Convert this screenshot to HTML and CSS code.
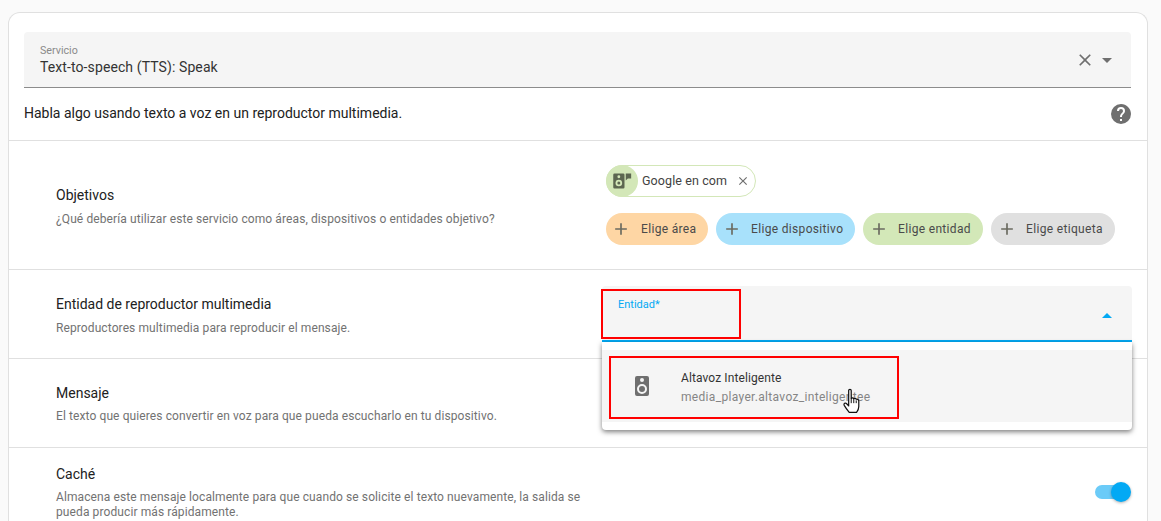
FILE: index.html
```html
<!DOCTYPE html>
<html lang="es">
<head>
<meta charset="utf-8">
<title>Text-to-speech</title>
<link rel="stylesheet" href="styles.css">
</head>
<body>
<main class="card">
  <section class="head">
    <div class="service">
      <div class="service-text">
        <span class="service-label">Servicio</span>
        <span class="service-value">Text-to-speech (TTS): Speak</span>
      </div>
      <svg class="ico-x" viewBox="0 0 24 24"><path d="M19 6.41L17.59 5 12 10.59 6.41 5 5 6.41 10.59 12 5 17.59 6.41 19 12 13.41 17.59 19 19 17.59 13.41 12z"/></svg>
      <svg class="ico-caret" viewBox="0 0 24 24"><path d="M7 10l5 5 5-5z"/></svg>
    </div>
    <div class="desc-row">
      <p class="desc">Habla algo usando texto a voz en un reproductor multimedia.</p>
      <svg class="ico-help" viewBox="0 0 24 24"><path d="M15.07 11.25l-.9.92C13.45 12.89 13 13.5 13 15h-2v-.5c0-1.11.45-2.11 1.17-2.83l1.24-1.26c.37-.36.59-.86.59-1.41a2 2 0 0 0-2-2 2 2 0 0 0-2 2H8a4 4 0 0 1 4-4 4 4 0 0 1 4 4c0 .88-.36 1.67-.93 2.25M13 19h-2v-2h2M12 2A10 10 0 0 0 2 12a10 10 0 0 0 10 10 10 10 0 0 0 10-10c0-5.53-4.5-10-10-10z"/></svg>
    </div>
  </section>

  <section class="row row-targets">
    <div class="info">
      <h3 class="title">Objetivos</h3>
      <p class="sub">¿Qué debería utilizar este servicio como áreas, dispositivos o entidades objetivo?</p>
    </div>
    <div class="control">
      <div class="chip">
        <span class="chip-icon">
          <svg viewBox="0 0 24 24"><path d="M3 3h10.5a1.500 1.500 0 0 1 1.500 1.500v15a1.500 1.500 0 0 1-1.500 1.500H3a1.500 1.500 0 0 1-1.500-1.500v-15A1.500 1.500 0 0 1 3 3zm5.200 2.200a1.700 1.700 0 1 0 0 3.400 1.700 1.700 0 0 0 0-3.400zm0 5.200a4 4 0 1 0 0 8 4 4 0 0 0 0-8zm0 2.200a1.800 1.800 0 1 1 0 3.600 1.800 1.800 0 0 1 0-3.600zM16.500 3H23v6h-4l-2.500 2.500z"/></svg>
        </span>
        <span class="chip-text">Google en com</span>
        <svg class="chip-x" viewBox="0 0 24 24"><path d="M19 6.41L17.59 5 12 10.59 6.41 5 5 6.41 10.59 12 5 17.59 6.41 19 12 13.41 17.59 19 19 17.59 13.41 12z"/></svg>
      </div>
      <div class="adds">
        <button class="add add-area"><svg viewBox="0 0 24 24"><path d="M19 13h-6v6h-2v-6H5v-2h6V5h2v6h6z"/></svg><span>Elige área</span></button>
        <button class="add add-device"><svg viewBox="0 0 24 24"><path d="M19 13h-6v6h-2v-6H5v-2h6V5h2v6h6z"/></svg><span>Elige dispositivo</span></button>
        <button class="add add-entity"><svg viewBox="0 0 24 24"><path d="M19 13h-6v6h-2v-6H5v-2h6V5h2v6h6z"/></svg><span>Elige entidad</span></button>
        <button class="add add-label"><svg viewBox="0 0 24 24"><path d="M19 13h-6v6h-2v-6H5v-2h6V5h2v6h6z"/></svg><span>Elige etiqueta</span></button>
      </div>
    </div>
  </section>

  <section class="row row-player">
    <div class="info">
      <h3 class="title">Entidad de reproductor multimedia</h3>
      <p class="sub">Reproductores multimedia para reproducir el mensaje.</p>
    </div>
    <div class="control">
      <div class="entity-field">
        <span class="entity-label">Entidad*</span>
        <svg class="ico-up" viewBox="0 0 24 24"><path d="M7 15l5-5 5 5z"/></svg>
        <span class="mark mark-label"></span>
        <div class="popup">
          <div class="option">
            <svg class="ico-speaker" viewBox="0 0 24 24"><path d="M12 12a3 3 0 1 0 0 6 3 3 0 0 0 0-6zm0 8a5 5 0 1 1 0-10 5 5 0 0 1 0 10zm0-16a2 2 0 1 1 0 4 2 2 0 0 1 0-4zm5-2H7a2 2 0 0 0-2 2v16a2 2 0 0 0 2 2h10a2 2 0 0 0 2-2V4a2 2 0 0 0-2-2z"/></svg>
            <div class="option-text">
              <span class="option-name">Altavoz Inteligente</span>
              <span class="option-id">media_player.altavoz_inteligentee</span>
            </div>
          </div>
          <span class="mark mark-option"></span>
          <svg class="hand" viewBox="0 0 18 24"><path d="M6 2.200c0-1.500 2.300-1.500 2.300 0v7c.9-.6 1.800-.5 2.300.3.800-.5 1.800-.3 2.200.5 1-.4 2.200.2 2.300 1.500v5c0 2.500-1 4-2 5.300H6.500C5 20 3.500 18 2 15.500c-.9-1.600 1-2.900 2.200-1.500L6 16z" fill="#fff" stroke="#111" stroke-width="1.100" stroke-linejoin="round"/><path d="M8.300 9.300v4.200M10.600 9.800v3.700M12.800 11v2.500" fill="none" stroke="#111" stroke-width=".9"/></svg>
        </div>
      </div>
    </div>
  </section>

  <section class="row row-message">
    <div class="info">
      <h3 class="title">Mensaje</h3>
      <p class="sub">El texto que quieres convertir en voz para que pueda escucharlo en tu dispositivo.</p>
    </div>
  </section>

  <section class="row row-cache">
    <div class="info">
      <h3 class="title">Caché</h3>
      <p class="sub">Almacena este mensaje localmente para que cuando se solicite el texto nuevamente, la salida se pueda producir más rápidamente.</p>
    </div>
    <div class="control control-switch">
      <div class="switch"><span class="knob"></span></div>
    </div>
  </section>
</main>
</body>
</html>
```
FILE: styles.css
```css
* { box-sizing: border-box; }
html, body { margin: 0; height: 521px; overflow: hidden; }
body {
  background: #fafafa;
  padding: 12px 13px 0 8px;
  font-family: Roboto, "Liberation Sans", sans-serif;
  color: #212121;
}
p, h3 { margin: 0; font-weight: 400; }

.card {
  height: 509px;
  background: #fff;
  border: 1px solid #e0e0e0;
  border-bottom: 0;
  border-radius: 12px 12px 0 0;
}

.head { padding: 19px 16px 0 15px; height: 127px; }
.service {
  height: 56px;
  background: #f5f5f5;
  border-bottom: 1px solid #8c8c8c;
  border-radius: 4px 4px 0 0;
  padding: 0 12px 0 16px;
  display: flex;
  align-items: center;
}
.service-text { flex: 1; display: flex; flex-direction: column; padding-top: 1px; }
.service-label { font-size: 10.7px; line-height: 14px; color: #8a8a8a; }
.service-value { font-size: 14px; line-height: 20px; letter-spacing: .1px; color: #333; margin-top: -1px; }
.ico-x { width: 20px; height: 20px; fill: #6f6f6f; }
.ico-caret { width: 24px; height: 24px; fill: #6f6f6f; }
.desc-row { display: flex; align-items: center; justify-content: space-between; height: 51px; }
.desc { font-size: 14px; color: #212121; margin-bottom: 2px; }
.ico-help { width: 24px; height: 24px; fill: #6f6f6f; margin-right: -2px; }

.row {
  border-top: 1px solid #e0e0e0;
  display: flex;
  padding-left: 47px;
  height: 89px;
}
.row-targets { height: 129px; }
.row-cache { height: 73px; }
.info { width: 546px; padding-top: 24px; }
.row-targets .info { padding-top: 44px; }
.row-cache .info { padding-top: 16px; }
.title { font-size: 14px; line-height: 20px; color: #212121; }
.sub { font-size: 12px; line-height: 16px; letter-spacing: .1px; color: #727272; margin-top: 6px; }
.row-message .sub { margin-top: 5px; }
.row-cache .sub { line-height: 15px; margin-top: 6px; }

.control { flex: 1; min-width: 0; padding-right: 15px; }
.row-targets .control { padding-top: 24px; }
.chip {
  width: 150px;
  height: 32px;
  margin-left: 4px;
  border: 1px solid #d3e7b8;
  border-radius: 16px;
  display: flex;
  align-items: center;
  background: #fff;
}
.chip-icon {
  width: 32px;
  height: 32px;
  margin: -1px 0 -1px -1px;
  border-radius: 50%;
  background: #d3e7b8;
  display: flex;
  align-items: center;
  justify-content: center;
  flex: none;
}
.chip-icon svg { width: 20px; height: 20px; fill: #5c6650; }
.chip-text { font-size: 12.5px; letter-spacing: .1px; color: #424242; margin: 0 0 2px 4px; flex: 1; white-space: nowrap; }
.chip-x { width: 14px; height: 14px; fill: #6f6f6f; margin-right: 5px; flex: none; }

.adds { display: flex; gap: 8px; margin: 16px 0 0 4px; }
.add {
  height: 32px;
  border: 0;
  border-radius: 16px;
  padding: 0 0 0 6px;
  display: flex;
  align-items: center;
  font: 12px Roboto, "Liberation Sans", sans-serif;
  letter-spacing: .33px;
  color: #4a4a4a;
  text-align: left;
  white-space: nowrap;
  flex: none;
}
.add svg { width: 20px; height: 20px; fill: #6b6b60; margin-right: 9px; flex: none; }
.add-area { background: #fed6a4; width: 102px; padding-left: 5px; }
.add-area svg { margin-right: 10px; }
.add-device { background: #a8e1fb; width: 139px; }
.add-entity { background: #d3e8b8; width: 120px; }
.add-label { background: #e0e0e0; width: 124px; }

.row-player .control { padding-top: 16px; }
.entity-field {
  position: relative;
  height: 56px;
  background: #f5f5f5;
  border-bottom: 2px solid #03a9f4;
  border-radius: 4px 4px 0 0;
}
.entity-label { position: absolute; left: 16px; top: 12px; font-size: 11px; line-height: 14px; color: #03a9f4; }
.ico-up { position: absolute; right: 13px; top: 17px; width: 24px; height: 24px; fill: #03a9f4; }
.mark { position: absolute; border: 2px solid #f00; pointer-events: none; }
.mark-label { left: -1px; top: 3px; width: 140px; height: 50px; }

.popup {
  position: absolute;
  left: 0;
  right: 0;
  top: 56px;
  height: 88px;
  background: #fff;
  border-radius: 0 0 4px 4px;
  box-shadow: 0 2px 5px rgba(0,0,0,.5);
  padding-top: 8px;
  z-index: 2;
}
.option { height: 72px; background: #f5f5f5; display: flex; align-items: center; padding-left: 28px; }
.ico-speaker { width: 24px; height: 24px; fill: #6f6f6f; flex: none; margin-right: 27px; }
.option-text { display: flex; flex-direction: column; padding-top: 2px; }
.option-name { font-size: 12px; line-height: 20px; letter-spacing: .1px; color: #333; }
.option-id { font-size: 12px; line-height: 20px; letter-spacing: .32px; color: #858585; margin-top: -1px; }
.mark-option { left: 7px; top: 14px; width: 290px; height: 63px; }
.hand { position: absolute; left: 240px; top: 46px; width: 20px; height: 27px; }

.control-switch { display: flex; justify-content: flex-end; padding-top: 37px; padding-right: 26px; }
.switch { position: relative; width: 26px; height: 14px; border-radius: 7px; background: #6bcbf8; }
.knob {
  position: absolute;
  left: 16px;
  top: -3px;
  width: 20px;
  height: 20px;
  border-radius: 50%;
  background: #03a9f4;
  box-shadow: 0 1px 3px rgba(0,0,0,.3);
}
```
